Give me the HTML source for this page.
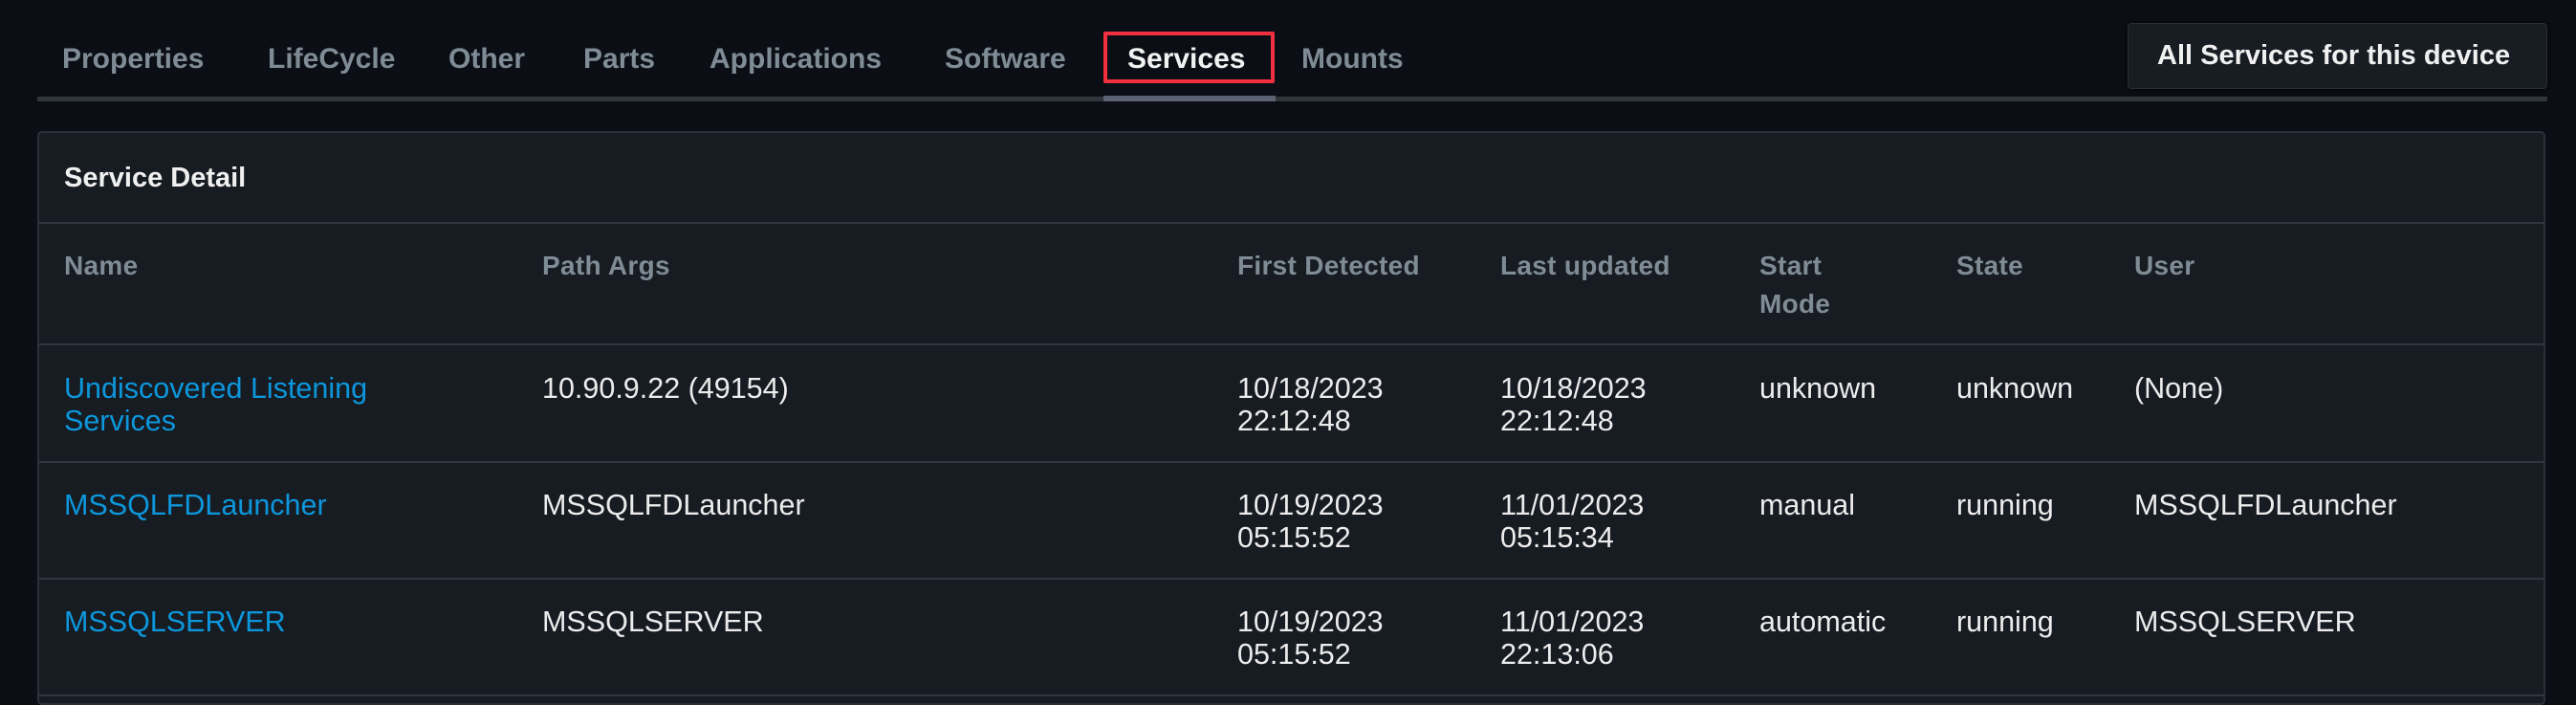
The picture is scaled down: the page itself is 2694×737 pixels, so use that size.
<!DOCTYPE html>
<html><head><meta charset="utf-8"><style>
*{margin:0;padding:0;box-sizing:border-box}
body{width:2694px;height:730px;background:#0b0e15;font-family:"Liberation Sans",sans-serif;position:relative;overflow:hidden}
.a{position:absolute;white-space:nowrap}
.tab{top:44px;font-size:30px;font-weight:bold;color:#7f8c96;line-height:36px}
.hd{font-size:28px;font-weight:bold;color:#7f8c96;line-height:40px;letter-spacing:0.3px}
.c{font-size:30.5px;color:#ececec;line-height:34px}
.l{color:#0c97dc}
</style></head><body>
<div class="a tab" style="left:65px">Properties</div>
<div class="a tab" style="left:280px">LifeCycle</div>
<div class="a tab" style="left:469px">Other</div>
<div class="a tab" style="left:610px">Parts</div>
<div class="a tab" style="left:742px">Applications</div>
<div class="a tab" style="left:988px">Software</div>
<div class="a tab" style="left:1179px;color:#f2f2f2">Services</div>
<div class="a tab" style="left:1361px">Mounts</div>
<div class="a" style="left:1154px;top:33px;width:179px;height:54px;border:4px solid #f0303f;border-radius:2px"></div>
<div class="a" style="left:39px;top:101px;width:2625px;height:5px;background:#31353c"></div>
<div class="a" style="left:1154px;top:100px;width:180px;height:6px;background:#5b6373"></div>
<div class="a" style="left:2225px;top:24px;width:439px;height:69px;background:#181c23;border:1px solid #2a2e35;border-radius:4px;box-shadow:0 0 4px #000"></div>
<div class="a" style="left:2256px;top:40px;font-size:29px;font-weight:bold;color:#f0f0f0;line-height:36px">All Services for this device</div>
<div class="a" style="left:39px;top:137px;width:2623px;height:600px;background:#171b22;border:2px solid #2b3038;border-radius:5px"></div>
<div class="a" style="left:41px;top:232px;width:2620px;height:2px;background:#31363e"></div>
<div class="a" style="left:41px;top:359px;width:2620px;height:2px;background:#31363e"></div>
<div class="a" style="left:41px;top:482px;width:2620px;height:2px;background:#31363e"></div>
<div class="a" style="left:41px;top:604px;width:2620px;height:2px;background:#31363e"></div>
<div class="a" style="left:41px;top:726px;width:2620px;height:2px;background:#31363e"></div>
<div class="a" style="left:67px;top:168px;font-size:29px;font-weight:bold;color:#f0f0f0;line-height:36px">Service Detail</div>
<div class="a hd" style="left:67px;top:258px">Name</div>
<div class="a hd" style="left:567px;top:258px">Path Args</div>
<div class="a hd" style="left:1294px;top:258px">First Detected</div>
<div class="a hd" style="left:1569px;top:258px">Last updated</div>
<div class="a hd" style="left:1840px;top:258px">Start<br>Mode</div>
<div class="a hd" style="left:2046px;top:258px">State</div>
<div class="a hd" style="left:2232px;top:258px">User</div>

<div class="a c l" style="left:67px;top:389px">Undiscovered Listening<br>Services</div>
<div class="a c" style="left:567px;top:389px">10.90.9.22 (49154)</div>
<div class="a c" style="left:1294px;top:389px">10/18/2023<br>22:12:48</div>
<div class="a c" style="left:1569px;top:389px">10/18/2023<br>22:12:48</div>
<div class="a c" style="left:1840px;top:389px">unknown</div>
<div class="a c" style="left:2046px;top:389px">unknown</div>
<div class="a c" style="left:2232px;top:389px">(None)</div>

<div class="a c l" style="left:67px;top:511px">MSSQLFDLauncher</div>
<div class="a c" style="left:567px;top:511px">MSSQLFDLauncher</div>
<div class="a c" style="left:1294px;top:511px">10/19/2023<br>05:15:52</div>
<div class="a c" style="left:1569px;top:511px">11/01/2023<br>05:15:34</div>
<div class="a c" style="left:1840px;top:511px">manual</div>
<div class="a c" style="left:2046px;top:511px">running</div>
<div class="a c" style="left:2232px;top:511px">MSSQLFDLauncher</div>

<div class="a c l" style="left:67px;top:633px">MSSQLSERVER</div>
<div class="a c" style="left:567px;top:633px">MSSQLSERVER</div>
<div class="a c" style="left:1294px;top:633px">10/19/2023<br>05:15:52</div>
<div class="a c" style="left:1569px;top:633px">11/01/2023<br>22:13:06</div>
<div class="a c" style="left:1840px;top:633px">automatic</div>
<div class="a c" style="left:2046px;top:633px">running</div>
<div class="a c" style="left:2232px;top:633px">MSSQLSERVER</div>
</body></html>
